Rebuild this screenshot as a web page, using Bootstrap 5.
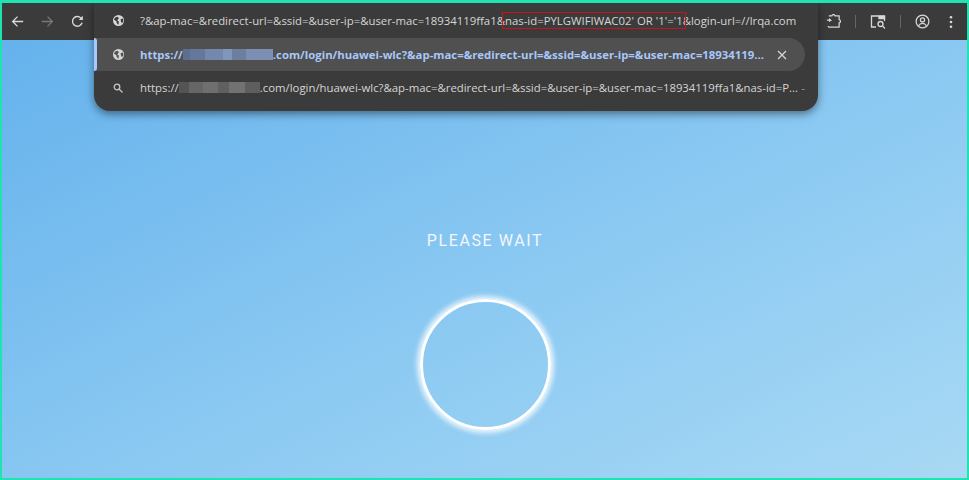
<!DOCTYPE html>
<html lang="en"><head><meta charset="utf-8"><title>Please wait</title>
<link href="https://cdn.jsdelivr.net/npm/bootstrap@5.3.0/dist/css/bootstrap.min.css" rel="stylesheet">
<style>
html,body{height:100%;margin:0;overflow:hidden}
body{font-family:"Open Sans","Liberation Sans",sans-serif;background:#fff}
.frame{height:480px;width:969px;border:solid #1fe3b0;border-width:3px 2px 2px 2px;background:linear-gradient(to bottom right,#62b0ec 0%,#8bc9f2 56%,#a8d9f4 100%);position:relative;overflow:hidden}
.toolbar{height:37px;background:#3b3b3b;color:#d3d3d3}
.tbtn{width:30px;display:flex;justify-content:center}
.tools{gap:14px;padding-right:9px}
.sep{width:1px;height:13px;background:#666}
.omni{position:absolute;left:92px;top:0;width:724px;height:108px;background:#3b3b3b;border-radius:0 0 16px 16px;box-shadow:0 3px 9px rgba(0,0,0,.45);color:#d5d5d5;font-size:11.36px;white-space:nowrap}
.orow{display:flex;align-items:center;padding-left:19px}
.r1{height:35px}
.r2{height:33px;width:711px;background:#505050;border-radius:0 17px 17px 0;position:relative;color:#a8c7fa;font-weight:700}
.r2::before{content:"";position:absolute;left:0;top:0;bottom:0;width:3px;background:#a8c7fa;border-radius:0 3px 3px 0}
.r3{height:33px}
.oicon{width:27px;flex:none;display:flex}
.redbox{position:relative}
.redbox::after{content:"";position:absolute;left:-3px;right:-3px;top:-1px;bottom:-1px;border:1.5px solid #c8141b}
.pix{display:inline-block;height:11px;vertical-align:-1px}
.pa{width:90px;background:linear-gradient(90deg,#5b6f90 0 8%,#66789a 8% 25%,#7488ab 25% 45%,#8096bc 45% 55%,#6d7f9f 55% 70%,#7c8fb2 70% 100%)}
.pb{width:81px;background:linear-gradient(90deg,#545454 0 12%,#666 12% 30%,#6f6f6f 30% 48%,#606060 48% 62%,#727272 62% 82%,#5e5e5e 82% 100%)}
.xbtn{margin-left:auto;margin-right:18px}
.dot{margin-left:auto;margin-right:13px;color:#999}
.waitzone{height:calc(100% - 37px)}
.waittxt{color:#f2f8fd;font-family:Roboto,"Liberation Sans",sans-serif;font-size:16px;letter-spacing:1.6px;margin-top:192px;margin-left:1px;line-height:18px}
.ring{width:131px;height:131px;margin-top:49px;margin-left:2px;border-radius:50%;border:3px solid #fff;box-shadow:0 0 5px 3px rgba(255,255,255,.8)}
</style></head><body>
<div class="frame">
 <div class="toolbar d-flex align-items-center justify-content-between">
  <div class="d-flex">
   <span class="tbtn"><svg width="13" height="13" viewBox="0 0 16 16" fill="none" stroke="#d8d8d8" stroke-width="1.6"><path d="M15 8H2M8 2 2 8l6 6"/></svg></span>
   <span class="tbtn"><svg width="13" height="13" viewBox="0 0 16 16" fill="none" stroke="#787878" stroke-width="1.6"><path d="M1 8h13M8 2l6 6-6 6"/></svg></span>
   <span class="tbtn"><svg width="13" height="13" viewBox="0 0 16 16" fill="none" stroke="#d8d8d8" stroke-width="1.7"><path d="M13.6 9.5A6 6 0 1 1 12.3 3.8L14 5.6"/><path d="M14.5 1v5h-5" fill="#d8d8d8" stroke="none"/></svg></span>
  </div>
  <div class="d-flex align-items-center tools">
   <svg width="15" height="15" viewBox="0 0 16 16" fill="none" stroke="#d8d8d8" stroke-width="1.3"><path d="M3 2h3.200a1.800 1.800 0 0 1 3.500 0H14v4a1.800 1.800 0 0 1 0 3.500V14H3l-1-1M1 6.500h4l-1.600-1.600M5 6.500 3.400 8.100"/></svg>
   <span class="sep"></span>
   <svg width="16" height="15" viewBox="0 0 16 15" fill="none" stroke="#d8d8d8" stroke-width="1.3"><path d="M6 13H1.500V2h13v5"/><path d="M9 2.500h5.500v2H9z" fill="#d8d8d8"/><circle cx="10.500" cy="10" r="2.500"/><path d="m12.500 12 2.500 2.500"/></svg>
   <span class="sep"></span>
   <svg width="15" height="15" viewBox="0 0 16 16" fill="none" stroke="#d8d8d8" stroke-width="1.3"><circle cx="8" cy="8" r="6.800"/><circle cx="8" cy="6.300" r="2.200"/><path d="M3.800 12.500c1-2 2.500-2.600 4.200-2.600s3.200.6 4.200 2.600"/></svg>
   <svg width="14" height="14" viewBox="0 0 14 14" fill="#d8d8d8"><circle cx="7" cy="2.200" r="1.300"/><circle cx="7" cy="7" r="1.300"/><circle cx="7" cy="11.800" r="1.300"/></svg>
  </div>
 </div>
 <div class="omni">
  <div class="orow r1"><span class="oicon"><svg width="11" height="11" viewBox="0 0 16 16"><circle cx="8" cy="8" r="8" fill="#d5d5d5"/><path d="M3 3.500 7 2.500 8.500 5 6 7.500l2.500 2L8 14 5.500 12 5 9 1.500 7zM11 6l3.500-1 .5 4-2 3-1.500-3z" fill="#3b3b3b"/></svg></span><span>?&amp;ap-mac=&amp;redirect-url=&amp;ssid=&amp;user-ip=&amp;user-mac=18934119ffa1&amp;<span class="redbox">nas-id=PYLGWIFIWAC02' OR '1'='1</span>&amp;login-url=//lrqa.com</span></div>
  <div class="orow r2"><span class="oicon"><svg width="11" height="11" viewBox="0 0 16 16"><circle cx="8" cy="8" r="8" fill="#d5d5d5"/><path d="M3 3.500 7 2.500 8.500 5 6 7.500l2.500 2L8 14 5.500 12 5 9 1.500 7zM11 6l3.500-1 .5 4-2 3-1.500-3z" fill="#505050"/></svg></span><span>https://<span class="pix pa"></span>.com/login/huawei-wlc?&amp;ap-mac=&amp;redirect-url=&amp;ssid=&amp;user-ip=&amp;user-mac=18934119...</span>
   <svg class="xbtn" width="10" height="10" viewBox="0 0 10 10" stroke="#d5d5d5" stroke-width="1.300"><path d="m1 1 8 8M9 1 1 9"/></svg></div>
  <div class="orow r3"><span class="oicon"><svg width="10" height="10" viewBox="0 0 10 10" fill="none" stroke="#c4c4c4" stroke-width="1.300"><circle cx="4" cy="4" r="2.800"/><path d="m6 6 3.500 3.500"/></svg></span><span>https://<span class="pix pb"></span>.com/login/huawei-wlc?&amp;ap-mac=&amp;redirect-url=&amp;ssid=&amp;user-ip=&amp;user-mac=18934119ffa1&amp;nas-id=P...</span><span class="dot">-</span></div>
 </div>
 <div class="waitzone d-flex flex-column align-items-center">
  <div class="waittxt">PLEASE WAIT</div>
  <div class="ring"></div>
 </div>
</div>
</body></html>
